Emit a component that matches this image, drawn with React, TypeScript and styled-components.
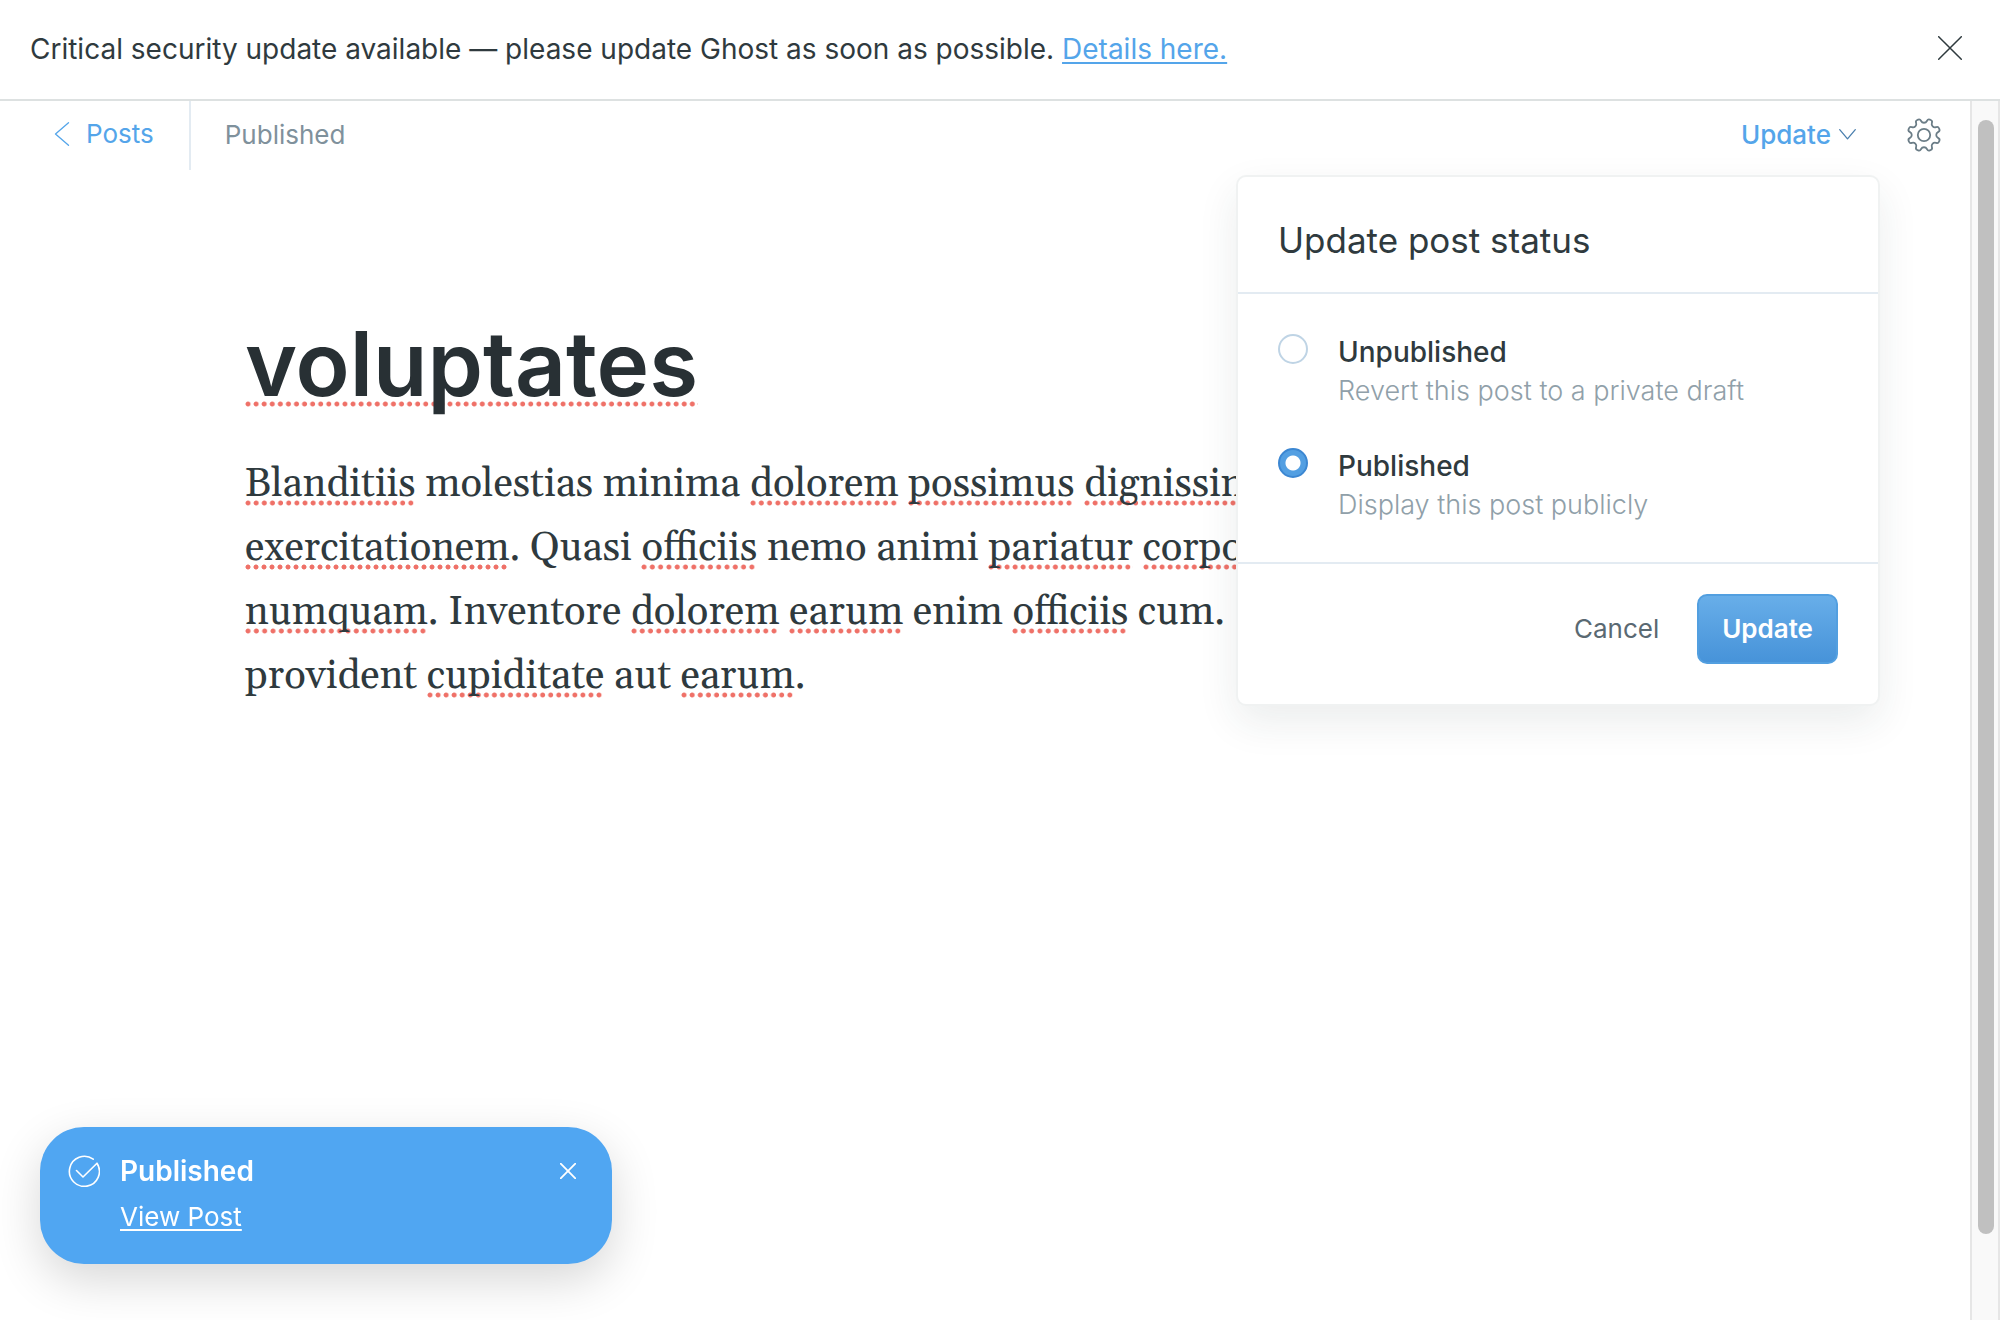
import { useState } from "react";
import styled, { createGlobalStyle } from "styled-components";

const GlobalStyle = createGlobalStyle`
  * { box-sizing: border-box; }
  body {
    margin: 0;
    background: #fff;
    color: #2f3a3e;
    font-family: Inter, "Liberation Sans", sans-serif;
    font-size: 26px;
    line-height: 32px;
  }
  h1, h2, p { margin: 0; }
  button {
    padding: 0;
    border: 0;
    background: none;
    font: inherit;
    color: inherit;
    cursor: pointer;
  }
`;

const Page = styled.div`
  display: flex;
  flex-direction: column;
  min-height: 100vh;
`;

const Banner = styled.aside`
  display: flex;
  align-items: flex-start;
  justify-content: space-between;
  padding: 31px 38px 32px 30px;
  border-bottom: 2px solid #dde1e1;
  line-height: 36px;
  font-size: 28px;
`;

const BannerLink = styled.a`
  color: #54a5ea;
  text-decoration: underline;
  text-decoration-thickness: 2px;
  text-underline-offset: 3px;
  text-decoration-skip-ink: none;
`;

const IconButton = styled.button`
  display: flex;
`;

const BannerClose = styled(IconButton)`
  padding-top: 5px;
`;

const Workspace = styled.div`
  display: flex;
  flex: 1;
`;

const Editor = styled.main`
  flex: 1;
  min-width: 0;
`;

const Toolbar = styled.header`
  display: flex;
  align-items: stretch;
  height: 69px;
`;

const BackLink = styled.a`
  display: flex;
  align-items: center;
  gap: 16px;
  padding: 0 35px 3px 54px;
  border-right: 2px solid #e3ebf2;
  color: #54a5ea;
  text-decoration: none;
`;

const PostState = styled.span`
  flex: 1;
  align-self: center;
  padding: 0 0 2px 34px;
  color: #7f919c;
`;

const Actions = styled.div`
  display: flex;
  align-items: center;
  gap: 52px;
  padding: 0 30px 2px 0;
`;

const MenuAnchor = styled.div`
  position: relative;
`;

const MenuTrigger = styled.button`
  display: flex;
  align-items: center;
  gap: 8px;
  color: #54a5ea;
  font-weight: 500;
`;

const Popover = styled.form`
  position: absolute;
  top: 56px;
  right: -24px;
  z-index: 2;
  width: 644px;
  border: 2px solid #f0f2f2;
  border-radius: 10px;
  background: #fff;
  box-shadow: 0 16px 40px rgba(30, 50, 50, 0.09);
`;

const PopoverTitle = styled.h2`
  padding: 41px 40px 30px;
  border-bottom: 2px solid #e3ebf2;
  font-size: 35px;
  font-weight: 400;
  line-height: 44px;
`;

const Options = styled.div`
  display: flex;
  flex-direction: column;
  gap: 36px;
  padding: 38px 40px;
  border-bottom: 2px solid #e3ebf2;
`;

const Option = styled.label`
  display: grid;
  grid-template-columns: 30px 1fr;
  column-gap: 30px;
  align-items: start;
  cursor: pointer;
`;

const Radio = styled.input`
  appearance: none;
  width: 30px;
  height: 30px;
  margin: 2px 0 0;
  border: 2px solid #bfd4e5;
  border-radius: 50%;
  background: #fff;

  &:checked {
    border-color: #3c87d2;
    background: radial-gradient(circle, #fff 7px, #539fe2 8px);
  }
`;

const OptionText = styled.span`
  display: flex;
  flex-direction: column;
`;

const OptionName = styled.span`
  font-size: 28px;
  font-weight: 500;
  line-height: 40px;
`;

const OptionHint = styled.span`
  color: #90a0a9;
  font-size: 27px;
  font-weight: 300;
  line-height: 38px;
`;

const PopoverFooter = styled.div`
  display: flex;
  justify-content: flex-end;
  align-items: center;
  gap: 38px;
  padding: 30px 40px 40px;
`;

const CancelButton = styled.button`
  color: #5a6972;
`;

const SubmitButton = styled.button`
  height: 70px;
  padding: 0 23px;
  border: 2px solid #529fe0;
  border-radius: 10px;
  background: linear-gradient(#68aee9, #4793d9);
  color: #fff;
  font-weight: 600;
`;

const Post = styled.article`
  max-width: 1480px;
  margin: 0 auto;
  padding-top: 138px;
`;

const PostTitle = styled.h1`
  color: #283034;
  font-size: 89px;
  font-weight: 600;
  line-height: 112px;
`;

const PostBody = styled.p`
  padding-top: 33px;
  font-family: Georgia, Gelasio, "Liberation Serif", serif;
  font-size: 40px;
  line-height: 64px;
  white-space: nowrap;
`;

const Misspelt = styled.span<{ $rise: number }>`
  padding-bottom: 4px;
  background-image: radial-gradient(circle at 3px 3px, #ef7168 0 35%, #ef716800 50%);
  background-position: left 0 bottom ${(p) => p.$rise}px;
  background-size: 8px 6px;
  background-repeat: space no-repeat;
`;

const ScrollTrack = styled.div`
  display: grid;
  grid-template-rows: 33fr 2fr;
  width: 30px;
  padding: 19px 4px 19px 6px;
  border: solid #e6e6e6;
  border-width: 0 2px;
  background: #f9f9f9;
`;

const ScrollThumb = styled.div`
  width: 16px;
  border-radius: 8px;
  background: #c0c0c0;
`;

const Toast = styled.section`
  position: fixed;
  left: 40px;
  bottom: 56px;
  z-index: 3;
  display: flex;
  align-items: flex-start;
  gap: 20px;
  width: 572px;
  padding: 26px 36px 28px 28px;
  border-radius: 44px;
  background: #50a6f2;
  color: #fff;
  box-shadow: 0 16px 48px rgba(0, 0, 0, 0.16);
`;

const ToastIcon = styled.span`
  display: flex;
  padding-top: 2px;
`;

const ToastBody = styled.div`
  display: flex;
  flex: 1;
  flex-direction: column;
  align-items: flex-start;
  gap: 8px;
`;

const ToastTitle = styled.strong`
  font-size: 28px;
  font-weight: 600;
  line-height: 36px;
`;

const ToastLink = styled.a`
  color: inherit;
  line-height: 39px;
  text-decoration-thickness: 2px;
  text-underline-offset: 3px;
`;

const ToastClose = styled.button`
  display: flex;
  padding-top: 10px;
`;

const Cross = ({ size, width }: { size: number; width: number }) => (
  <svg width={size} height={size} viewBox={`0 0 ${size} ${size}`} fill="none" stroke="currentColor" strokeWidth={width} strokeLinecap="round" aria-hidden="true">
    <path d={`M.7 .7 L${size - 0.7} ${size - 0.7} M${size - 0.7} .7 L.7 ${size - 0.7}`} />
  </svg>
);

const gearPath = (() => {
  const points: [number, number][] = [];
  for (let i = 0; i < 8; i++) {
    const mid = (i * Math.PI) / 4 + Math.PI / 8;
    [[-0.15, 16.6], [0.15, 16.6], [0.23, 12.4], [Math.PI / 4 - 0.23, 12.4]].forEach(([da, r]) =>
      points.push([16 + r * Math.cos(mid + da), 16 + r * Math.sin(mid + da)]),
    );
  }
  const toward = (a: [number, number], b: [number, number]) => {
    const len = Math.hypot(b[0] - a[0], b[1] - a[1]);
    const t = Math.min(2 / len, 0.5);
    return `${(a[0] + (b[0] - a[0]) * t).toFixed(2)} ${(a[1] + (b[1] - a[1]) * t).toFixed(2)}`;
  };
  return (
    points
      .map((p, i) => {
        const prev = points[(i + points.length - 1) % points.length];
        const next = points[(i + 1) % points.length];
        return `${i ? "L" : "M"}${toward(p, prev)} Q${p[0].toFixed(2)} ${p[1].toFixed(2)} ${toward(p, next)}`;
      })
      .join(" ") + "Z"
  );
})();

const Gear = () => (
  <svg width="32" height="32" viewBox="0 0 32 32" fill="none" stroke="#6b7d87" strokeWidth="1.8" strokeLinejoin="round" overflow="visible" aria-hidden="true">
    <circle cx="16" cy="16" r="6.2" />
    <path d={gearPath} />
  </svg>
);

const lines = [
  "*Blanditiis* molestias minima *dolorem* *possimus* *dignissimos*",
  "*exercitationem*. Quasi *officiis* nemo animi *pariatur* *corporis*",
  "*numquam*. Inventore *dolorem* *earum* enim *officiis* cum.",
  "provident *cupiditate* aut *earum*.",
];

const markLine = (line: string) =>
  line.split("*").map((part, i) => (i % 2 ? <Misspelt key={i} $rise={8}>{part}</Misspelt> : part));

const choices = [
  { id: "unpublished", name: "Unpublished", hint: "Revert this post to a private draft" },
  { id: "published", name: "Published", hint: "Display this post publicly" },
];

export default function App() {
  const [status, setStatus] = useState("published");
  return (
    <Page>
      <GlobalStyle />
      <Banner>
        <span>
          Critical security update available — please update Ghost as soon as possible.{" "}
          <BannerLink href="#details">Details here.</BannerLink>
        </span>
        <BannerClose aria-label="Dismiss">
          <Cross size={24} width={1.5} />
        </BannerClose>
      </Banner>
      <Workspace>
        <Editor>
          <Toolbar>
            <BackLink href="#posts">
              <svg width="16" height="24" viewBox="0 0 16 24" fill="none" stroke="currentColor" strokeWidth="1.3" strokeLinecap="round" strokeLinejoin="round" aria-hidden="true">
                <path d="M14.5 .7 1.5 12l13 11.3" />
              </svg>
              Posts
            </BackLink>
            <PostState>Published</PostState>
            <Actions>
              <MenuAnchor>
                <MenuTrigger aria-expanded="true">
                  Update
                  <svg width="17" height="11" viewBox="0 0 17 11" fill="none" stroke="#4a7fae" strokeWidth="1.3" strokeLinecap="round" strokeLinejoin="round" aria-hidden="true">
                    <path d="M.7 .7 8.5 9.8 16.3 .7" />
                  </svg>
                </MenuTrigger>
                <Popover onSubmit={(e) => e.preventDefault()}>
                  <PopoverTitle>Update post status</PopoverTitle>
                  <Options>
                    {choices.map((c) => (
                      <Option key={c.id} htmlFor={c.id}>
                        <Radio type="radio" id={c.id} name="status" checked={status === c.id} onChange={() => setStatus(c.id)} />
                        <OptionText>
                          <OptionName>{c.name}</OptionName>
                          <OptionHint>{c.hint}</OptionHint>
                        </OptionText>
                      </Option>
                    ))}
                  </Options>
                  <PopoverFooter>
                    <CancelButton type="button">Cancel</CancelButton>
                    <SubmitButton type="submit">Update</SubmitButton>
                  </PopoverFooter>
                </Popover>
              </MenuAnchor>
              <IconButton aria-label="Post settings">
                <Gear />
              </IconButton>
            </Actions>
          </Toolbar>
          <Post>
            <PostTitle>
              <Misspelt $rise={14}>voluptates</Misspelt>
            </PostTitle>
            <PostBody>
              {lines.map((line, i) => (
                <span key={i}>
                  {markLine(line)}
                  {i < lines.length - 1 && <br />}
                </span>
              ))}
            </PostBody>
          </Post>
        </Editor>
        <ScrollTrack aria-hidden="true">
          <ScrollThumb />
        </ScrollTrack>
      </Workspace>
      <Toast role="status">
        <ToastIcon>
          <svg width="32" height="32" viewBox="0 0 32 32" fill="none" stroke="currentColor" strokeWidth="1.6" strokeLinecap="round" strokeLinejoin="round" aria-hidden="true">
            <path d="M8.5 15.5 15 22 29 8.2A15 15 0 1 1 25.2 4.2" />
          </svg>
        </ToastIcon>
        <ToastBody>
          <ToastTitle>Published</ToastTitle>
          <ToastLink href="#post">View Post</ToastLink>
        </ToastBody>
        <ToastClose aria-label="Close notification">
          <Cross size={16} width={1.8} />
        </ToastClose>
      </Toast>
    </Page>
  );
}
